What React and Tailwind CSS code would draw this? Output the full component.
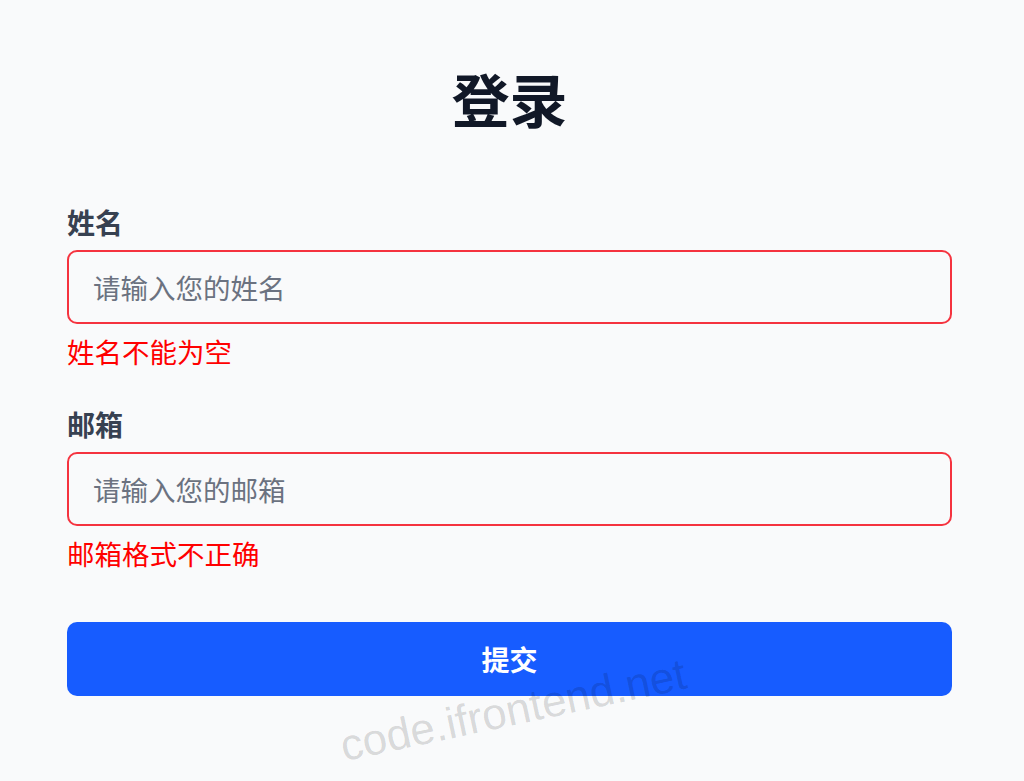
import React from "react";

const cjk = { fontFamily: '"Noto Sans CJK SC", "Noto Sans", sans-serif' };

function Field({ label, placeholder, error }) {
  return (
    <div className="flex flex-col">
      <label className="text-[28px] leading-[40px] font-bold text-[#374151]">{label}</label>
      <input
        type="text"
        placeholder={placeholder}
        className="mt-2 h-[74px] w-full rounded-[10px] border-2 border-[#f5333f] bg-transparent px-6 text-[27.5px] text-[#111827] outline-none placeholder:text-[#6b7280]"
        style={cjk}
      />
      <div className="mt-[7px] text-[27.5px] leading-[40px] text-[#f00]">{error}</div>
    </div>
  );
}

export default function App() {
  return (
    <div className="relative min-h-[781px] w-full overflow-hidden bg-[#f9fafb]" style={cjk}>
      <div className="flex flex-col pl-[67px] pr-[72px] pt-[69px]">
        <h1 className="text-center text-[58px] leading-none font-bold text-[#111827]">登录</h1>
        <div className="mt-[75px] flex flex-col gap-[33px]">
          <Field label="姓名" placeholder="请输入您的姓名" error="姓名不能为空" />
          <Field label="邮箱" placeholder="请输入您的邮箱" error="邮箱格式不正确" />
        </div>
        <button
          type="button"
          className="mt-[49px] h-[74px] w-full rounded-[10px] bg-[#175cff] text-[28px] font-bold text-white"
          style={cjk}
        >
          提交
        </button>
      </div>
      <div
        className="pointer-events-none absolute left-[337px] top-[688px] w-[352px] -rotate-12 whitespace-nowrap text-[44px] leading-none text-black/15"
        style={{ fontFamily: '"Liberation Sans", Arial, sans-serif' }}
      >
        code.ifrontend.net
      </div>
    </div>
  );
}
